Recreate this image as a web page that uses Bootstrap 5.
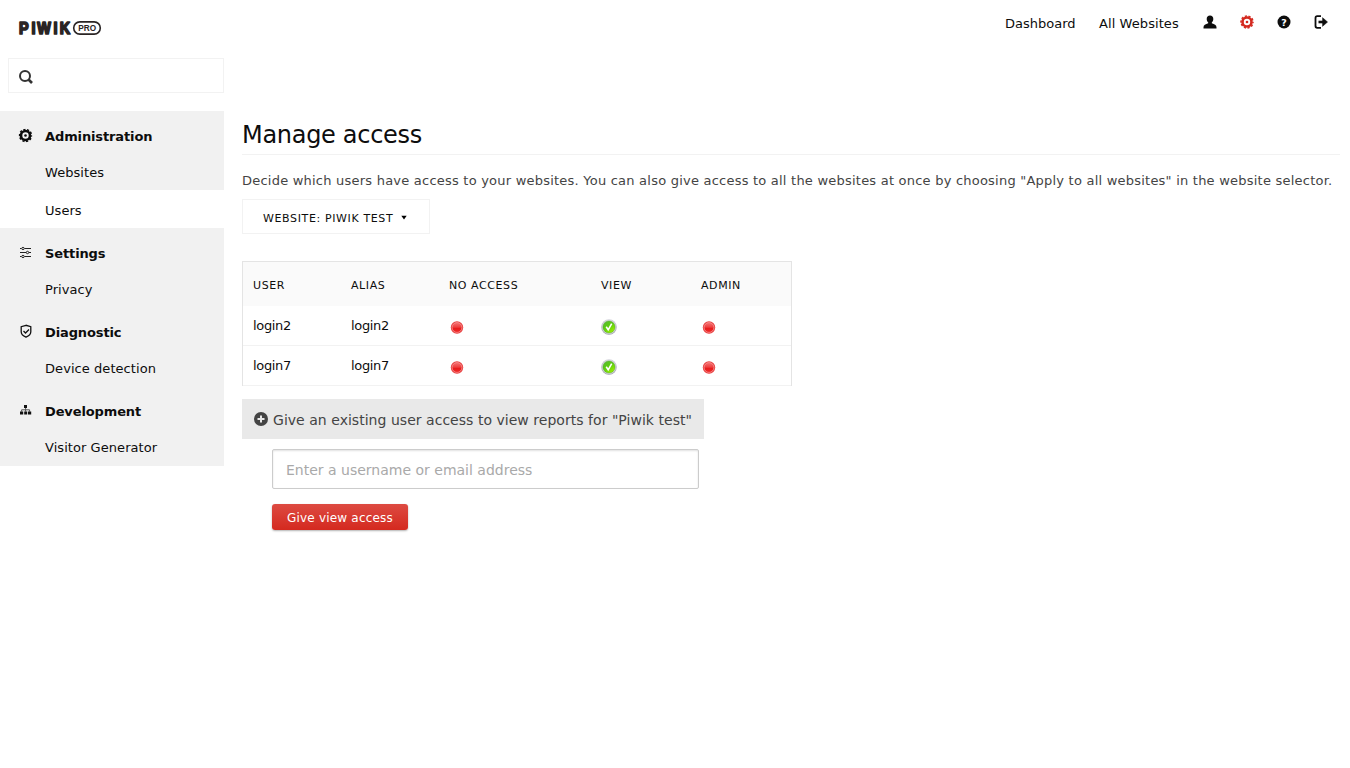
<!DOCTYPE html>
<html lang="en">
<head>
<meta charset="utf-8">
<title>Manage access</title>
<link href="https://cdn.jsdelivr.net/npm/bootstrap@5.3.0/dist/css/bootstrap.min.css" rel="stylesheet">
<style>
body{font-family:Verdana,"DejaVu Sans",sans-serif;font-size:13px;line-height:18px;color:#0d0d0d;background:#fff;height:768px;overflow:hidden}
a{color:inherit;text-decoration:none}
svg{display:block;flex:none}
.topbar{height:58px}
.brand-logo{margin:18px 0 0 17px}
.topnav{padding:13px 21px 0 0}
.nav-dash{width:94px;padding-top:2px}
.nav-sites{width:104px;padding-top:2px;letter-spacing:.08px}
.nav-icon{width:37px}
.topnav .active{color:#d4291f}
.topnav svg{margin-top:-2px}
.side{width:224px}
.searchbox{margin:0 0 18px 8px;height:35px;border:1px solid #f2f2f2;padding:2px 0 0 9px}
.menu{background:#f1f1f1}
.menu-head{height:43px;padding:9px 0 0 18px;font-weight:700;letter-spacing:-.12px}
.menu-head svg{margin:-3px 12px 0 0}
.menu-item{height:36px;padding:2px 0 0 45px;letter-spacing:.06px}
.menu-item.current{height:38px;background:#fff;padding-top:4px}
.menu section:last-child .menu-item{height:37px;padding-bottom:1px}
.content{margin:62px 10px 0 18px}
h1{font-size:24px;line-height:30px;height:35px;margin:0 0 17px;border-bottom:1px solid #f2f2f2;letter-spacing:-.3px}
.intro{color:#444;margin:0 0 9px;white-space:nowrap;letter-spacing:.224px}
.site-select{width:188px;height:35px;border:1px solid #f2f2f2;font-size:11px;padding:4px 0 0 20px;margin-bottom:27px;letter-spacing:.63px}
.site-select svg{margin-top:-2px}
.access{width:550px;table-layout:fixed;border:1px solid #e4e4e4;border-bottom:0;border-collapse:separate;border-spacing:0;margin:0 0 13px}
.access th{height:44px;background:#fafafa;font-weight:400;font-size:11px;padding:4px 0 0 10px;vertical-align:middle;text-transform:uppercase;letter-spacing:.58px}
.access td{height:40px;border-bottom:1px solid #f2f2f2;padding:0 0 0 10px;vertical-align:middle;letter-spacing:-.33px}
.access td svg{margin-top:3px}
.give{width:462px;height:40px;background:#e9e9e9;color:#444;font-size:14px;padding:1px 0 0 12px;margin-bottom:10px;white-space:nowrap;letter-spacing:.03px}
.give svg{margin:-2px 5px 0 0}
.who{display:block;width:427px;height:40px;margin:0 0 15px 30px;border:1px solid #ccc;border-radius:2px;box-shadow:inset 0 1px 2px rgba(0,0,0,.12);padding:2px 13px 0;font-size:14px;color:#444}
.who::placeholder{color:#a9a9a9;opacity:1}
.give-btn{display:block;margin-left:30px;width:136px;height:26px;padding:0;border:0;border-radius:3px;font-size:12px;line-height:28px;letter-spacing:.2px;color:#fff;background:linear-gradient(#dd4b42,#d4291f);box-shadow:0 1px 2px rgba(0,0,0,.3)}
</style>
</head>
<body>
<svg width="0" height="0" class="position-absolute">
<defs>
<linearGradient id="gr" x1="0" y1="0" x2="0" y2="1"><stop offset="0" stop-color="#f47070"/><stop offset=".45" stop-color="#ee4040"/><stop offset=".6" stop-color="#e81c1c"/><stop offset="1" stop-color="#f02828"/></linearGradient>
<linearGradient id="gg" x1="0" y1="0" x2=".7" y2="1"><stop offset="0" stop-color="#58b83a"/><stop offset=".5" stop-color="#5ccc10"/><stop offset="1" stop-color="#9cf000"/></linearGradient>
<linearGradient id="gs" x1="0" y1="0" x2="0" y2="1"><stop offset="0" stop-color="#d4d4dc"/><stop offset="1" stop-color="#9c9ca8"/></linearGradient>
</defs>
<symbol id="gear" viewBox="0 0 14 14"><circle cx="7" cy="7" r="4.500" fill="none" stroke="currentColor" stroke-width="2.600"/><circle cx="7" cy="7" r="6" fill="none" stroke="currentColor" stroke-width="1.500" stroke-dasharray="2.200 1.570" stroke-dashoffset="1.100"/><circle cx="7" cy="7" r="1.300" fill="currentColor"/></symbol>
<symbol id="red" viewBox="0 0 16 16"><circle cx="8" cy="8.500" r="6.200" fill="#e84040"/><circle cx="8" cy="8.500" r="4.900" fill="url(#gr)" stroke="#f59090" stroke-width=".8"/></symbol>
<symbol id="ok" viewBox="0 0 16 16"><circle cx="8" cy="8" r="7.800" fill="url(#gs)"/><circle cx="8" cy="8" r="6.900" fill="#e4e4e8"/><circle cx="8" cy="8" r="6.100" fill="url(#gg)" stroke="#4a9a2a" stroke-width=".5"/><path d="M5.200 7.800l2 3L10.700 4.600" fill="none" stroke="#fff" stroke-width="1.600"/></symbol>
</svg>
<header class="topbar d-flex justify-content-between align-items-start">
  <a href="#" class="brand-logo"><svg width="86" height="20" viewBox="0 0 86 20" fill="#2a2424" font-family="Liberation Sans" font-weight="700"><text transform="scale(.9 1)" x="7.700 18.400 30.200 42.700 53.300" y="16" font-size="16" text-anchor="middle" stroke="#2a2424" stroke-width="1.700" stroke-linejoin="round">PIWIK</text><rect x="56.700" y="3.900" width="26.600" height="12.200" rx="6.100" fill="none" stroke="#2a2424" stroke-width="1.600"/><text x="61.300" y="13" font-size="8.600" textLength="17.800" lengthAdjust="spacingAndGlyphs">PRO</text></svg></a>
  <nav class="topnav d-flex align-items-center">
    <a href="#" class="nav-dash">Dashboard</a><a href="#" class="nav-sites">All Websites</a>
    <a href="#" class="nav-icon"><svg width="14" height="14" fill="currentColor"><path d="M7 .5c2.100 0 3.300 1.500 3.300 3.500 0 1.400-.6 2.700-1.500 3.500v.8c2.600.8 4.700 1.900 4.700 4v1.200H.5v-1.200c0-2.100 2.100-3.200 4.700-4v-.8C4.300 6.700 3.700 5.400 3.700 4 3.700 2 4.900.5 7 .5z"/></svg></a>
    <a href="#" class="nav-icon active"><svg width="14" height="14"><use href="#gear"/></svg></a>
    <a href="#" class="nav-icon"><svg width="14" height="14"><circle cx="7" cy="7" r="6.500" fill="currentColor"/><text x="7" y="10.600" font-size="9.500" font-weight="700" fill="#fff" text-anchor="middle">?</text></svg></a>
    <a href="#"><svg width="15" height="14" fill="none" stroke="currentColor"><path d="M7 1.200H3.200Q1.500 1.200 1.500 2.900v8.200q0 1.700 1.700 1.700H7" stroke-width="1.800"/><path d="M4.500 7h6" stroke-width="2.600"/><path d="M8.500 2.600L13.600 7l-5.100 4.400z" fill="currentColor" stroke-width=".4"/></svg></a>
  </nav>
</header>
<div class="d-flex align-items-start">
  <aside class="side flex-shrink-0">
    <div class="searchbox d-flex align-items-center"><svg width="16" height="16" fill="none" stroke="#333"><circle cx="7" cy="7" r="5" stroke-width="2"/><path d="M10.500 10.500l3.500 3.500" stroke-width="2.600"/></svg></div>
    <nav class="menu">
      <section><div class="menu-head d-flex align-items-center"><svg width="15" height="15"><use href="#gear" x=".5" y=".5" width="14" height="14"/></svg>Administration</div><a href="#" class="menu-item d-flex align-items-center">Websites</a><a href="#" class="menu-item current d-flex align-items-center">Users</a></section>
      <section><div class="menu-head d-flex align-items-center"><svg width="15" height="15" fill="none" stroke="#222"><path d="M2 3.500h1.500m3 0H13M2 7.500h6m3 0h2M2 11.500h1.500m3 0H13"/><circle cx="5" cy="3.500" r="1.200"/><circle cx="9.500" cy="7.500" r="1.200"/><circle cx="5" cy="11.500" r="1.200"/></svg>Settings</div><a href="#" class="menu-item d-flex align-items-center">Privacy</a></section>
      <section><div class="menu-head d-flex align-items-center"><svg width="15" height="15" fill="none" stroke="#111" stroke-width="1.300"><path d="M8 1.300L3.200 2.700v5.100c0 2.700 2.100 4.300 4.800 5.400 2.700-1.100 4.800-2.700 4.800-5.400V2.700z"/><path d="M5.500 7l2 2L11 5.500"/></svg>Diagnostic</div><a href="#" class="menu-item d-flex align-items-center">Device detection</a></section>
      <section><div class="menu-head d-flex align-items-center"><svg width="15" height="15" fill="#111"><path d="M6 2h3v3H6zM2 8.500h3.200v3H2zM6.200 8.500h3v3h-3zM10 8.500h3.200v3H10z"/><path d="M7.600 5v4M3.600 9V6.800h8V9" fill="none" stroke="#555"/></svg>Development</div><a href="#" class="menu-item d-flex align-items-center">Visitor Generator</a></section>
    </nav>
  </aside>
  <main class="content flex-grow-1">
    <h1>Manage access</h1>
    <p class="intro">Decide which users have access to your websites. You can also give access to all the websites at once by choosing "Apply to all websites" in the website selector.</p>
    <div class="site-select d-flex align-items-center">WEBSITE: PIWIK TEST<svg class="ms-2" width="6" height="5"><path d="M.3.800h5.400L3 4.600z"/></svg></div>
    <table class="access">
      <colgroup><col width="98"><col width="98"><col width="152"><col width="100"><col></colgroup>
      <thead><tr><th>User</th><th>Alias</th><th>No access</th><th>View</th><th>Admin</th></tr></thead>
      <tbody>
      <tr><td>login2</td><td>login2</td><td><svg width="16" height="16"><use href="#red"/></svg></td><td><svg width="16" height="16"><use href="#ok"/></svg></td><td><svg width="16" height="16"><use href="#red"/></svg></td></tr>
      <tr><td>login7</td><td>login7</td><td><svg width="16" height="16"><use href="#red"/></svg></td><td><svg width="16" height="16"><use href="#ok"/></svg></td><td><svg width="16" height="16"><use href="#red"/></svg></td></tr>
      </tbody>
    </table>
    <div class="give d-flex align-items-center"><svg width="14" height="14"><circle cx="7" cy="7" r="7" fill="#444"/><path d="M7 3.500v7M3.500 7h7" stroke="#e9e9e9" stroke-width="2"/></svg>Give an existing user access to view reports for "Piwik test"</div>
    <input class="who" placeholder="Enter a username or email address">
    <button class="give-btn">Give view access</button>
  </main>
</div>
<script src="https://cdn.jsdelivr.net/npm/bootstrap@5.3.0/dist/js/bootstrap.bundle.min.js"></script>
</body>
</html>
